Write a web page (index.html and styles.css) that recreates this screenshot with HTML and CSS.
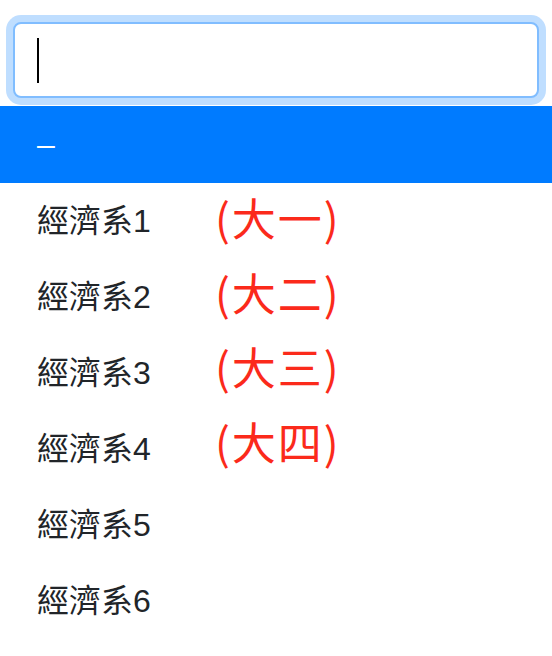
FILE: index.html
```html
<!DOCTYPE html>
<html lang="zh-Hant">
<head>
  <meta charset="UTF-8">
  <meta name="viewport" content="width=device-width, initial-scale=1.0">
  <title>科系選單</title>
  <link rel="stylesheet" href="styles.css">
</head>
<body>
  <div class="picker">
    <div class="search-box">
      <div class="search-input"><span class="caret"></span></div>
    </div>
    <div class="dropdown">
      <ul class="options">
        <li class="option active">–</li>
        <li class="option">經濟系1</li>
        <li class="option">經濟系2</li>
        <li class="option">經濟系3</li>
        <li class="option">經濟系4</li>
        <li class="option">經濟系5</li>
        <li class="option">經濟系6</li>
      </ul>
      <div class="notes">
        <div class="note">(大一)</div>
        <div class="note">(大二)</div>
        <div class="note">(大三)</div>
        <div class="note">(大四)</div>
      </div>
    </div>
  </div>
</body>
</html>
```
FILE: styles.css
```css
body {
  margin: 0;
  background: #fff;
  font-family: "Liberation Sans", "Noto Sans CJK TC", sans-serif;
  color: #212529;
}
.search-box {
  padding: 22px 13px 8px;
}
.search-input {
  height: 72px;
  border: 2px solid #80bdff;
  border-radius: 8px;
  box-shadow: 0 0 0 7px rgba(0, 123, 255, 0.25);
  display: flex;
  align-items: center;
  padding-left: 22px;
  background: #fff;
}
.caret {
  width: 2px;
  height: 45px;
  background: #000;
}
.dropdown {
  position: relative;
}
.options {
  list-style: none;
  margin: 0;
  padding: 0;
}
.option {
  box-sizing: border-box;
  height: 76px;
  display: flex;
  align-items: center;
  padding: 0 0 6px 37px;
  font-size: 32px;
}
.option.active {
  height: 77px;
  padding-bottom: 0;
  background: #007bff;
  color: #fff;
}
.notes {
  position: absolute;
  left: 215px;
  top: 74px;
  display: flex;
  flex-direction: column;
}
.note {
  height: 74.5px;
  display: flex;
  align-items: center;
  font-family: "Noto Sans CJK TC", sans-serif;
  font-size: 44px;
  letter-spacing: 2px;
  color: #fb2a1b;
}
```
